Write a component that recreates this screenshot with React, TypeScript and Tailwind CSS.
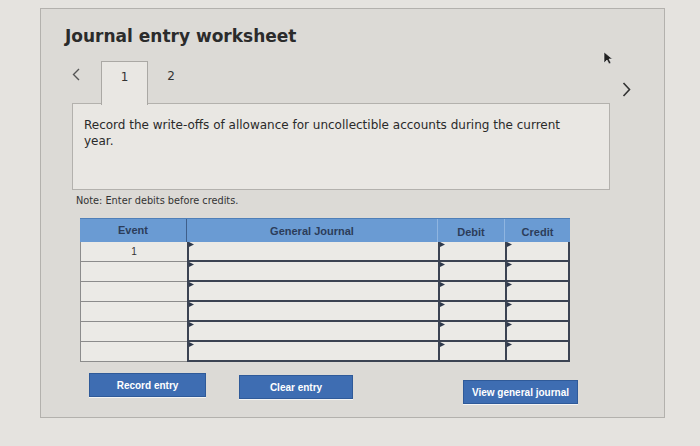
import React from "react";

const rows = [0, 1, 2, 3, 4, 5];

function Marker() {
  return (
    <svg width="5" height="6" viewBox="0 0 5 6" className="absolute left-0 top-0">
      <path d="M0 0 L5 2.5 L0 5 Z" fill="#2f3a4c" />
    </svg>
  );
}

function InputCell({ w, last }: { w: string; last?: boolean }) {
  return (
    <div
      className={`relative ${w} h-full bg-[#ebeae6] border-l-2 border-b-2 border-[#3b4352] ${last ? "border-r-2" : ""}`}
    >
      <Marker />
    </div>
  );
}

export default function App() {
  return (
    <div className="w-[700px] h-[446px] bg-[#e5e3df] pt-[8px] overflow-hidden" style={{ fontFamily: "'DejaVu Sans', Verdana, sans-serif" }}>
      <div className="relative ml-[40px] w-[625px] h-[410px] bg-[#dcdad6] border border-[#b3b1ad]">
        {/* cursor */}
        <svg width="10" height="14" viewBox="0 0 10 14" className="absolute left-[562px] top-[42px]">
          <path d="M1 1 L1 12 L4 9 L6 13 L8 12 L6 8 L9.5 8 Z" fill="#222" stroke="#eee" strokeWidth="0.6" />
        </svg>

        <h1 className="ml-[24px] pt-[17px] text-[17px] leading-[20px] font-bold text-[#2b2b2b]">
          Journal entry worksheet
        </h1>

        {/* tabs */}
        <div className="flex items-start h-[43px] mt-[15px] pl-[28px]">
          <div className="w-[14px] h-[43px] flex items-start pt-[7px] justify-center">
            <svg width="8" height="13" viewBox="0 0 8 13">
              <path d="M7 1 L1.5 6.5 L7 12" fill="none" stroke="#555" strokeWidth="1.4" />
            </svg>
          </div>
          <div className="ml-[18px] w-[47px] h-[44px] bg-[#e9e7e3] border border-b-0 border-[#aaa8a4] relative z-10 flex justify-center pt-[6px] text-[12px] text-[#333]">
            1
          </div>
          <div className="w-[46px] flex justify-center pt-[6px] text-[12px] text-[#333]">2</div>
          <div className="ml-auto mr-[33px] mt-[21px]">
            <svg width="9" height="15" viewBox="0 0 9 15">
              <path d="M1.5 1 L7.5 7.5 L1.5 14" fill="none" stroke="#333" strokeWidth="1.6" />
            </svg>
          </div>
        </div>

        {/* prompt box */}
        <div className="ml-[31px] w-[538px] h-[87px] -mt-px bg-[#e9e7e3] border border-[#b3b1ad] pl-[11px] pt-[13px] pr-[36px]">
          <p className="text-[12px] leading-[16px] text-[#2a2a2a]">
            Record the write-offs of allowance for uncollectible accounts during the current year.
          </p>
        </div>

        <p className="ml-[35px] mt-[5px] text-[9.75px] leading-[12px] text-[#333]">Note: Enter debits before credits.</p>

        {/* table */}
        <div className="ml-[39px] mt-[11px] w-[490px]">
          <div className="flex h-[24px] bg-[#6a9bd3] text-[11px] font-bold text-[#2c3d5a] border-t border-[#4f7fb8]" style={{ fontFamily: "'Liberation Sans', Arial, sans-serif" }}>
            <div className="w-[107px] flex items-center justify-center border-r border-[#3f5f8a]">Event</div>
            <div className="w-[251px] flex items-center justify-center border-r border-[#8fb5e0] pt-[2px]">General Journal</div>
            <div className="w-[67px] flex items-center justify-center border-r border-[#8fb5e0] pt-[3px]">Debit</div>
            <div className="flex-1 flex items-center justify-center pt-[3px]">Credit</div>
          </div>
          {rows.map((i) => (
            <div key={i} className="flex h-[20px]">
              <div className="w-[107px] h-full bg-[#ebeae6] border-l border-b border-[#8c8c8c] flex items-center justify-center text-[10px] text-[#333]" style={{ fontFamily: "'Liberation Sans', Arial, sans-serif" }}>
                {i === 0 ? "1" : ""}
              </div>
              <InputCell w="w-[251px]" />
              <InputCell w="w-[67px]" />
              <InputCell w="flex-1" last />
            </div>
          ))}
        </div>

        {/* buttons */}
        <div className="flex items-start mt-[11px] ml-[48px] text-[10px] font-bold text-white" style={{ fontFamily: "'Liberation Sans', Arial, sans-serif" }}>
          <button className="w-[117px] h-[24px] bg-[#3e6db2] border border-[#2f5a99] shadow-[0_1px_0_#f4f4f4]">Record entry</button>
          <button className="ml-[33px] mt-[2px] w-[114px] h-[24px] bg-[#3e6db2] border border-[#2f5a99] shadow-[0_1px_0_#f4f4f4]">Clear entry</button>
          <button className="ml-[110px] mt-[7px] w-[115px] h-[24px] bg-[#3e6db2] border border-[#2f5a99] shadow-[0_1px_0_#f4f4f4]">View general journal</button>
        </div>
      </div>
    </div>
  );
}
